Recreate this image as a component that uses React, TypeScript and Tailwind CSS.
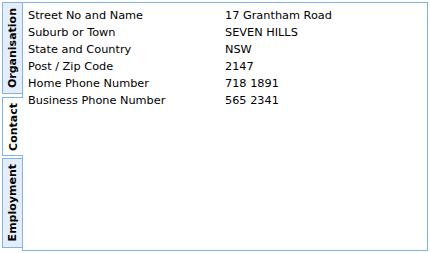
import React from 'react';

const rows: [string, string][] = [
  ['Street No and Name', '17 Grantham Road'],
  ['Suburb or Town', 'SEVEN HILLS'],
  ['State and Country', 'NSW'],
  ['Post / Zip Code', '2147'],
  ['Home Phone Number', '718 1891'],
  ['Business Phone Number', '565 2341'],
];

function Tab({ label, active, className }: { label: string; active?: boolean; className: string }) {
  return (
    <div
      className={
        'flex items-center justify-center border-l border-t border-b border-[#7eb4ea] ' +
        (active ? 'relative z-10 -mr-px w-[21px] bg-white ' : 'w-[20px] bg-[#e4edf9] ') +
        className
      }
    >
      <span className="rotate-180 [writing-mode:vertical-rl] font-bold text-[11px] leading-none text-black">
        {label}
      </span>
    </div>
  );
}

export default function App() {
  return (
    <div
      className="w-[430px] h-[253px] bg-white p-[2px] flex"
      style={{ fontFamily: '"DejaVu Sans", Verdana, sans-serif' }}
    >
      <div className="flex flex-col w-[20px]">
        <Tab label="Organisation" className="h-[92px]" />
        <Tab label="Contact" active className="h-[59px] mt-[3px]" />
        <Tab label="Employment" className="h-[90px] mt-[2px]" />
      </div>
      <div className="w-[406px] h-[249px] border border-[#7eb4ea] pt-[4px] pl-[5px]">
        {rows.map(([label, value]) => (
          <div key={label} className="flex text-[11.3px] leading-[17px] text-black">
            <div className="w-[197px]">{label}</div>
            <div>{value}</div>
          </div>
        ))}
      </div>
    </div>
  );
}
